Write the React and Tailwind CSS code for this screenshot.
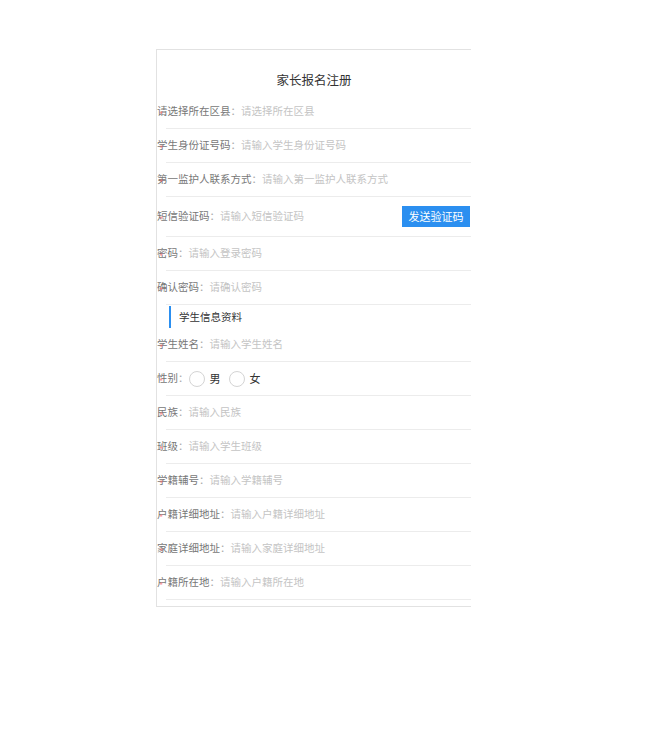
import React from 'react';

const font = { fontFamily: '"Noto Sans CJK SC", "Noto Sans", sans-serif' };

const topFields = [
  { label: '请选择所在区县', placeholder: '请选择所在区县' },
  { label: '学生身份证号码', placeholder: '请输入学生身份证号码' },
  { label: '第一监护人联系方式', placeholder: '请输入第一监护人联系方式' },
];

const studentFields = [
  { label: '民族', placeholder: '请输入民族' },
  { label: '班级', placeholder: '请输入学生班级' },
  { label: '学籍辅号', placeholder: '请输入学籍辅号' },
  { label: '户籍详细地址', placeholder: '请输入户籍详细地址' },
  { label: '家庭详细地址', placeholder: '请输入家庭详细地址' },
  { label: '户籍所在地', placeholder: '请输入户籍所在地' },
];

const Star = () => (
  <span className="absolute left-[2px] top-[50%] -translate-y-[2px] text-[9px] leading-none text-[#f56c6c] opacity-70">*</span>
);

const Row = ({ children, tall }) => (
  <div>
    <div className={`relative flex items-center ${tall ? 'h-[39px]' : 'h-[33px]'} text-[10.5px] leading-none`}>
      <Star />
      {children}
    </div>
    <div className="ml-[9px] h-px bg-[#ececec]" />
  </div>
);

const Field = ({ label, placeholder }) => (
  <Row>
    <span className="text-[#777]">{label}</span>
    <span className="text-[#aaa]">：</span>
    <span className="text-[#c4c4c4]">{placeholder}</span>
  </Row>
);

const Radio = ({ label }) => (
  <div className="flex items-center gap-[5px]">
    <span className="w-[16px] h-[16px] rounded-full border border-[#d4d4d4] bg-white" />
    <span className="text-[11px] text-[#333]">{label}</span>
  </div>
);

export default function App() {
  return (
    <div className="min-h-[732px] bg-white pt-[49px] pl-[156px]" style={font}>
      <div className="w-[315px] border-l border-t border-b border-[#e2e2e2] pb-[6px]">
        <div className="h-[45px] pt-[22px] text-center text-[12.5px] leading-[16px] text-[#333]">家长报名注册</div>

        {topFields.map((f) => (
          <Field key={f.label} {...f} />
        ))}

        <Row tall>
          <span className="text-[#777]">短信验证码</span>
          <span className="text-[#aaa]">：</span>
          <span className="text-[#c4c4c4]">请输入短信验证码</span>
          <button className="ml-auto mr-[1px] h-[21px] w-[68px] bg-[#2b8ff0] text-[11px] text-white">发送验证码</button>
        </Row>

        <Field label="密码" placeholder="请输入登录密码" />
        <Field label="确认密码" placeholder="请确认密码" />

        <div className="flex items-center h-[23px] pl-[12px]">
          <span className="w-[2px] h-[22px] bg-[#2b8ff0]" />
          <span className="ml-[8px] text-[10.5px] text-[#333]">学生信息资料</span>
        </div>

        <Field label="学生姓名" placeholder="请输入学生姓名" />

        <Row>
          <span className="text-[#777]">性别</span>
          <span className="text-[#aaa]">：</span>
          <div className="flex items-center gap-[8px]">
            <Radio label="男" />
            <Radio label="女" />
          </div>
        </Row>

        {studentFields.map((f) => (
          <Field key={f.label} {...f} />
        ))}
      </div>
    </div>
  );
}
